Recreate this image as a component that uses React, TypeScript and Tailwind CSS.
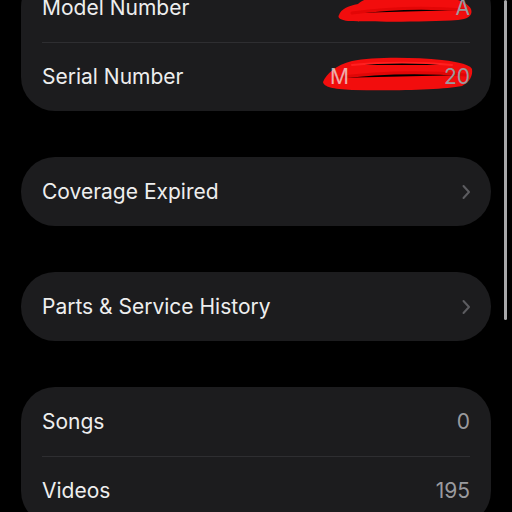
import React from 'react'

type Row = { label: string; value?: string; redact?: 'model' | 'serial'; chevron?: boolean }

const font = { fontFamily: 'Inter, "Noto Sans", sans-serif' }

function Chevron() {
  return (
    <svg width="10" height="16" viewBox="0 0 10 16" fill="none">
      <path d="M2.5 2l5.5 6-5.5 6" stroke="#5c5c60" strokeWidth={2} strokeLinecap="round" strokeLinejoin="round" />
    </svg>
  )
}

// red marker scribbles that hide the numbers
function Scribble({ kind }: { kind: 'model' | 'serial' }) {
  if (kind === 'model') {
    return (
      <svg className="absolute left-[296px] top-[20px]" width="136" height="30" viewBox="0 0 136 30">
        <path d="M1 22 C3 16 10 13 20 11 C26 4 50 0 90 1 C108 1 116 3 120 7 C126 9 131 12 133 16 C135 22 131 26 120 27 C90 29 40 29 10 28 C3 27 -1 25 1 22 Z" fill="#f20d0d" />
        <path d="M14 20 C50 15 90 14 126 17" stroke="#e30606" strokeWidth={3} strokeLinecap="round" />
      </svg>
    )
  }
  return (
    <svg className="absolute left-[280px] top-[14px]" width="152" height="35" viewBox="0 0 152 35">
      <path d="M1 25 C4 17 14 8 30 4 C50 0 90 0 120 3 C138 5 148 8 150 12 C151 18 148 25 140 29 C120 33 70 34 30 33 C10 32 2 30 1 25 Z" fill="#f20d0d" />
      <path d="M12 21 C50 16 100 14 144 18" stroke="#e00606" strokeWidth={3} strokeLinecap="round" />
      <path d="M30 8 C60 5 100 5 130 8" stroke="#ff2020" strokeWidth={2} strokeLinecap="round" />
    </svg>
  )
}

function Card({ rows }: { rows: Row[] }) {
  return (
    <div className="rounded-[34px] bg-[#1c1c1e] px-[21px]">
      {rows.map((row, i) => (
        <div key={row.label} className={`relative flex h-[69px] items-center justify-between ${i > 0 ? 'border-t border-[#2e2e31]' : ''}`}>
          <span className="text-[21px] text-[#eeeeee]">{row.label}</span>
          {row.redact && <Scribble kind={row.redact} />}
          {row.value && <span className="relative text-[21px] text-[#9a9a9e]">{row.value}</span>}
          {row.redact === 'serial' && (
            <span className="absolute left-[288px] top-[18px] text-[21px] text-[#eeeeee] opacity-70">M</span>
          )}
          {row.chevron && (
            <span className="mr-[-1px]">
              <Chevron />
            </span>
          )}
        </div>
      ))}
    </div>
  )
}

export default function App() {
  return (
    <div className="relative h-[512px] w-[512px] overflow-hidden bg-black" style={font}>
      <div className="mt-[-27px] flex flex-col gap-[46px] px-[21px]">
        <Card
          rows={[
            { label: 'Model Number', value: 'A', redact: 'model' },
            { label: 'Serial Number', value: '20', redact: 'serial' },
          ]}
        />
        <Card rows={[{ label: 'Coverage Expired', chevron: true }]} />
        <Card rows={[{ label: 'Parts & Service History', chevron: true }]} />
        <Card
          rows={[
            { label: 'Songs', value: '0' },
            { label: 'Videos', value: '195' },
          ]}
        />
      </div>
      <div className="absolute right-[5px] top-0 h-[320px] w-[3px] rounded-full bg-[#a8a8aa]" />
    </div>
  )
}
